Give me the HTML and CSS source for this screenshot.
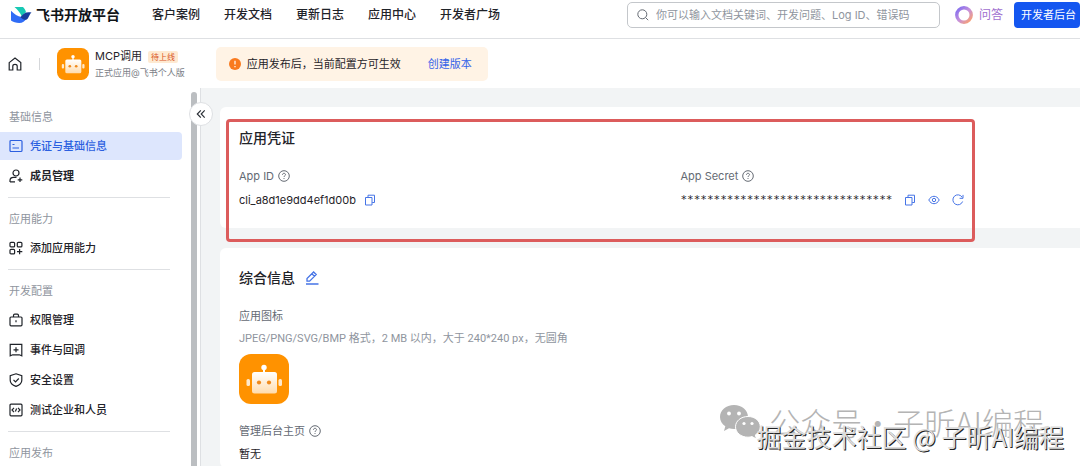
FILE: index.html
```html
<!DOCTYPE html>
<html lang="zh-CN">
<head>
<meta charset="utf-8">
<meta name="viewport" content="width=device-width, initial-scale=1">
<title>飞书开放平台</title>
<link rel="stylesheet" href="styles.css">
</head>
<body>
<svg class="defs" aria-hidden="true">
  <defs>
    <linearGradient id="botFace" x1="0" y1="0" x2="0" y2="1"><stop offset="0" stop-color="#fff"/><stop offset="1" stop-color="#ffdcae"/></linearGradient>
    <linearGradient id="ringFill" x1="0" y1="0" x2="1" y2="1"><stop offset="0" stop-color="#7d6bf0"/><stop offset=".5" stop-color="#c590dc"/><stop offset="1" stop-color="#ffa366"/></linearGradient>
    <symbol id="bot" viewBox="0 0 50 50">
      <rect width="50" height="50" rx="12" fill="#ff9200"/>
      <circle cx="25" cy="13.500" r="2.700" fill="#fff"/>
      <path d="M24 14h2v5h-2z" fill="#fff"/>
      <rect x="13" y="18" width="25" height="21.500" rx="2.500" fill="url(#botFace)"/>
      <rect x="7.500" y="25" width="3.500" height="7" rx="1.500" fill="#ffe9cc"/>
      <rect x="39.500" y="25" width="3.500" height="7" rx="1.500" fill="#ffe9cc"/>
      <circle cx="20" cy="28.500" r="2.100" fill="#f08a1c"/>
      <circle cx="30" cy="28.500" r="2.100" fill="#f08a1c"/>
    </symbol>
    <symbol id="help" viewBox="0 0 12 12">
      <circle cx="6" cy="6" r="5.300"/>
      <path d="M4.500 4.900C4.500 3.900 5.100 3.300 6 3.300s1.500.6 1.500 1.400C7.500 5.700 6 5.800 6 7M6 8.100v.9"/>
    </symbol>
    <symbol id="copy" viewBox="0 0 12 12">
      <path d="M1.500 3.500h6.500v7.500h-6.500zM4 3.300V1.200h6.500v7.300H8.200"/>
    </symbol>
  </defs>
</svg>

<header class="topbar">
  <a class="brand" href="#">
    <svg class="brand-mark" viewBox="0 0 22 18" aria-hidden="true">
      <path d="M4.500 1H13c1.600 1.500 2.600 3.300 3 5.300l-4.300 4C10 6.500 7.500 3.500 4.500 1z" fill="#18c9b4"/>
      <path d="M1 4.800c3.200 3.500 6.700 5.600 10.500 6.300 1.500.3 3-.2 4.200-1.200l3-2.800-2 5.200C15 15.500 12.500 17 9.300 17 6 17 3 16 1 14.500z" fill="#2f6cf6"/>
      <path d="M11 10.500c2.700-3.400 5.200-5 10.500-4-1.500 1.300-2.300 3.400-3.400 5.500-1.200 2.300-3.600 2.700-7.600-.8z" fill="#163c9c"/>
    </svg>
    <span>飞书开放平台</span>
  </a>
  <nav class="topnav" aria-label="主导航">
    <a href="#">客户案例</a>
    <a href="#">开发文档</a>
    <a href="#">更新日志</a>
    <a href="#">应用中心</a>
    <a href="#">开发者广场</a>
  </nav>
  <div class="tools">
    <label class="search">
      <svg class="search-icon" viewBox="0 0 12 12" aria-hidden="true"><circle cx="5.300" cy="5.300" r="4.500"/><path d="M8.600 8.600l2.600 2.600"/></svg>
      <input type="text" aria-label="搜索" placeholder="你可以输入文档关键词、开发问题、Log ID、错误码">
    </label>
    <a class="ask" href="#">
      <svg class="ring" viewBox="0 0 18 18" aria-hidden="true"><circle cx="9" cy="9" r="7.200" fill="none" stroke="url(#ringFill)" stroke-width="3.400"/></svg>
      <span>问答</span>
    </a>
    <button class="console" type="button">开发者后台</button>
  </div>
</header>

<div class="appbar">
  <a class="home" href="#" aria-label="首页">
    <svg class="line-icon" viewBox="0 0 14 14" aria-hidden="true"><path d="M1.200 5.600L7 1l5.800 4.600V13H9.200V9.300C9.200 8 8.300 7.300 7 7.300S4.800 8 4.800 9.300V13H1.200z"/></svg>
  </a>
  <span class="bar"></span>
  <svg class="app-icon" viewBox="0 0 50 50" aria-hidden="true"><use href="#bot"/></svg>
  <div class="app-info">
    <div class="app-name">MCP调用 <span class="tag">待上线</span></div>
    <div class="app-type">正式应用@飞书个人版</div>
  </div>
  <div class="notice">
    <svg class="notice-icon" viewBox="0 0 12 12" aria-hidden="true"><circle cx="6" cy="6" r="6" fill="#f97a1f"/><path d="M6 2.800v3.800M6 8v1.200" stroke="#fff" stroke-width="1.200"/></svg>
    <span>应用发布后，当前配置方可生效</span>
    <a href="#">创建版本</a>
  </div>
</div>

<div class="body">
  <aside class="sidebar">
    <nav class="menu" aria-label="应用菜单">
      <section class="group">
        <h2>基础信息</h2>
        <a class="active" href="#"><svg class="line-icon" viewBox="0 0 14 14" aria-hidden="true"><rect x="1" y="1.500" width="12" height="11" rx="1"/><path d="M3.500 5.500h2M3.500 9h6.500" /></svg>凭证与基础信息</a>
        <a class="strong" href="#"><svg class="line-icon" viewBox="0 0 14 14" aria-hidden="true"><circle cx="7" cy="4" r="3"/><path d="M1 13v-1.500C1 9.300 2.300 8.300 4.500 8.300H7.500M11 8.500v4.500M8.700 10.800h4.600M1 12.800h5"/></svg>成员管理</a>
      </section>
      <section class="group">
        <h2>应用能力</h2>
        <a href="#"><svg class="line-icon" viewBox="0 0 14 14" aria-hidden="true"><rect x="1" y="1.300" width="4.600" height="4.600" rx="1"/><rect x="8.300" y="1.300" width="4.600" height="4.600" rx="1"/><rect x="1" y="8.300" width="4.600" height="4.600" rx="1"/><path d="M10.600 8v5.300M8 10.600h5.300"/></svg>添加应用能力</a>
      </section>
      <section class="group">
        <h2>开发配置</h2>
        <a href="#"><svg class="line-icon" viewBox="0 0 14 14" aria-hidden="true"><rect x="1" y="4" width="12" height="8.800" rx="1"/><path d="M4.500 4V2.500c0-.8.500-1.300 1.300-1.300h2.400c.8 0 1.300.5 1.300 1.300V4M7 7.300v2"/></svg>权限管理</a>
        <a href="#"><svg class="line-icon" viewBox="0 0 14 14" aria-hidden="true"><path d="M1.200 1.300h11.600v11.500l-2.500-1H3.700l-2.500 1zM7 4.300v5M4.500 6.800h5"/></svg>事件与回调</a>
        <a href="#"><svg class="line-icon" viewBox="0 0 14 14" aria-hidden="true"><path d="M7 .8l5.800 1.800v4.600c0 3-2.300 5-5.800 6.200C3.500 12.200 1.200 10.200 1.200 7.200V2.600zM4.500 6.800l2 2 3.300-3.300"/></svg>安全设置</a>
        <a href="#"><svg class="line-icon" viewBox="0 0 14 14" aria-hidden="true"><rect x="1" y="1.200" width="12" height="11.600" rx="1"/><path d="M5 4.900L3 7l2 2.100M9 4.900L11 7 9 9.100M7.600 5.500L6.400 8.500"/></svg>测试企业和人员</a>
      </section>
      <section class="group">
        <h2>应用发布</h2>
      </section>
    </nav>
    <div class="track"></div>
    <button class="collapse" type="button" aria-label="收起菜单">
      <svg class="line-icon small" viewBox="0 0 12 12" aria-hidden="true"><path d="M5.800 2.300L2.300 6l3.500 3.700M9.700 2.300L6.200 6l3.500 3.700"/></svg>
    </button>
  </aside>

  <main class="main">
    <section class="card credentials">
      <h1>应用凭证</h1>
      <dl class="fields">
        <div class="field">
          <dt>App ID <svg class="help" aria-hidden="true"><use href="#help"/></svg></dt>
          <dd><span>cli_a8d1e9dd4ef1d00b</span>
            <button class="icon-btn" type="button" aria-label="复制"><svg aria-hidden="true"><use href="#copy"/></svg></button></dd>
        </div>
        <div class="field">
          <dt>App Secret <svg class="help" aria-hidden="true"><use href="#help"/></svg></dt>
          <dd><span class="secret">********************************</span>
            <button class="icon-btn" type="button" aria-label="复制"><svg aria-hidden="true"><use href="#copy"/></svg></button>
            <button class="icon-btn" type="button" aria-label="查看"><svg viewBox="0 0 12 12" aria-hidden="true"><path d="M.8 6C2 3.600 3.800 2.300 6 2.300S10 3.600 11.200 6C10 8.400 8.200 9.700 6 9.700S2 8.400.8 6z"/><circle cx="6" cy="6" r="1.700"/></svg></button>
            <button class="icon-btn" type="button" aria-label="重置"><svg viewBox="0 0 12 12" aria-hidden="true"><path d="M10.600 7.500A5 5 0 1 1 10.200 3.300M11 .9v3.400H7.600"/></svg></button></dd>
        </div>
      </dl>
      <div class="highlight"></div>
    </section>

    <section class="card general">
      <h1>综合信息
        <button class="icon-btn edit" type="button" aria-label="编辑"><svg viewBox="0 0 14 14" aria-hidden="true"><path d="M2 10.200V7.600L8.600 1l2.600 2.600-6.600 6.600zM6.900 2.800l2.600 2.600M1 13h12.500"/></svg></button>
      </h1>
      <h3>应用图标</h3>
      <p class="hint">JPEG/PNG/SVG/BMP 格式，2 MB 以内，大于 240*240 px，无圆角</p>
      <svg class="app-picture" viewBox="0 0 50 50" role="img" aria-label="应用图标"><use href="#bot"/></svg>
      <h3>管理后台主页 <svg class="help" aria-hidden="true"><use href="#help"/></svg></h3>
      <p class="value">暂无</p>
    </section>
  </main>
</div>

<div class="watermark">
  <div class="mark-back">
    <svg class="wechat" viewBox="0 0 42 36" aria-hidden="true">
      <path d="M15 1C7 1 1 6.200 1 13c0 4 2 7.200 5.300 9.300L5 27l5-2.700c1.600.4 3.300.7 5 .7 8 0 14-5.200 14-12S23 1 15 1z"/>
      <path class="front" d="M29 12.500c-7 0-12.500 4.500-12.500 10.300S22 33.200 29 33.200c1.400 0 2.800-.2 4-.6l4.500 2.400-1.200-4c3-1.900 5-4.800 5-8.200 0-5.800-5.300-10.300-12.300-10.300z"/>
      <g fill="#fff"><circle cx="10" cy="9.500" r="1.900"/><circle cx="20" cy="9.500" r="1.900"/><circle cx="25" cy="19.500" r="1.600"/><circle cx="33" cy="19.500" r="1.600"/></g>
    </svg>
    <span>公众号·子昕AI编程</span>
  </div>
  <div class="mark-front">掘金技术社区 @ 子昕AI编程</div>
</div>
</body>
</html>
```
FILE: styles.css
```css
* { box-sizing: border-box; }

body {
  margin: 0;
  min-height: 100vh;
  display: flex;
  flex-direction: column;
  position: relative;
  overflow: hidden;
  background: #fff;
  color: #1f2329;
  font: 11px/18px Inter, "Noto Sans CJK SC", sans-serif;
}

a { color: inherit; text-decoration: none; }
button, input { font: inherit; }
h1, h2, h3, p, dl, dd { margin: 0; }
.defs { position: absolute; width: 0; height: 0; }

.topbar {
  display: flex;
  align-items: center;
  padding: 0 0 9px 10px;
  height: 39px;
  border-bottom: 1px solid #dee0e3;
}
.brand {
  display: flex;
  align-items: center;
  gap: 4px;
  font-size: 14px;
  font-weight: 700;
  color: #101418;
}
.brand-mark { width: 22px; height: 18px; }
.topnav {
  display: flex;
  gap: 24px;
  margin-left: 32px;
  font-size: 12px;
  font-weight: 500;
}
.tools {
  display: flex;
  align-items: center;
  margin-left: auto;
}
.search {
  display: flex;
  align-items: center;
  gap: 7px;
  width: 313px;
  height: 26px;
  padding: 0 9px;
  border: 1px solid #c4c7cb;
  border-radius: 5px;
}
.search-icon {
  width: 12px;
  height: 12px;
  fill: none;
  stroke: #646a73;
}
.search input {
  flex: 1;
  min-width: 0;
  padding: 0;
  border: 0;
  outline: 0;
  background: none;
}
.search input::placeholder { color: #8f959e; opacity: 1; }
.ask {
  display: flex;
  align-items: center;
  gap: 6px;
  margin: 0 11px 0 15px;
  font-size: 12px;
  color: #a070cf;
}
.ring { width: 18px; height: 18px; }
.console {
  height: 26px;
  padding: 0 4px 0 7px;
  border: 0;
  border-radius: 4px;
  background: #1456f0;
  color: #fff;
}

.appbar {
  display: flex;
  align-items: center;
  height: 49px;
  padding-left: 8px;
}
.line-icon {
  display: block;
  width: 14px;
  height: 14px;
  fill: none;
  stroke: currentColor;
  stroke-width: 1.2;
}
.line-icon.small { width: 12px; height: 12px; }
.bar {
  width: 1px;
  height: 12px;
  margin: 0 17px;
  background: #d5d7da;
}
.app-icon { width: 32px; height: 32px; }
.app-info { margin-left: 6px; padding-top: 2px; }
.app-name {
  display: flex;
  align-items: center;
  gap: 6px;
  line-height: 17px;
}
.tag {
  padding: 0 3px;
  border-radius: 2px;
  background: #feead2;
  color: #d9541e;
  font-size: 8px;
  line-height: 12px;
}
.app-type {
  color: #7b8087;
  font-size: 9px;
  line-height: 16px;
}
.notice {
  display: flex;
  align-items: center;
  height: 34px;
  margin-left: 31px;
  padding: 0 16px 0 13px;
  border-radius: 5px;
  background: #fff3e5;
}
.notice-icon { width: 12px; height: 12px; margin-right: 6px; }
.notice a { margin-left: 27px; color: #3563e9; }

.body { display: flex; flex: 1; }
.sidebar {
  display: flex;
  position: relative;
  z-index: 1;
  width: 201px;
  border-right: 1px solid #dee0e3;
}
.menu { width: 182px; padding-top: 8px; }
.group h2 {
  margin: 11px 0 5px 9px;
  color: #8f959e;
  font-size: 11px;
  font-weight: 400;
  line-height: 20px;
}
.group a {
  display: flex;
  align-items: center;
  gap: 7px;
  height: 28px;
  margin-top: 2px;
  padding-left: 9px;
  border-radius: 0 4px 4px 0;
  font-weight: 500;
}
.group + .group::before {
  content: "";
  display: block;
  height: 1px;
  margin: 7px 12px 0 8px;
  background: #dee0e3;
}
.group a.active { background: #dde6fd; color: #2b5fe0; }
.group a.strong { font-weight: 700; }
.track {
  width: 6px;
  margin: 4px 0 0 9px;
  border-radius: 3px 3px 0 0;
  background: #bbbec1;
}
.collapse {
  display: grid;
  place-items: center;
  position: absolute;
  top: 14px;
  right: -13px;
  width: 24px;
  height: 24px;
  padding: 0;
  border: 1px solid #dee0e3;
  border-radius: 50%;
  background: #fff;
  color: #2b2f36;
}

.main {
  display: flex;
  flex-direction: column;
  flex: 1;
  gap: 20px;
  padding: 19px 0 0 19px;
  background: #f2f4f5;
}
.card {
  position: relative;
  padding: 20px 18px 19px 19px;
  border-radius: 6px 0 0 6px;
  background: #fff;
}
.card h1 {
  display: flex;
  align-items: center;
  gap: 10px;
  font-size: 14px;
  font-weight: 500;
  line-height: 22px;
}
.fields {
  display: grid;
  grid-template-columns: 1fr 1fr;
  gap: 60px;
  margin-top: 18px;
}
.field dt, .card h3 {
  display: flex;
  align-items: center;
  gap: 4px;
  color: #646a73;
  font-size: 11px;
  font-weight: 400;
  line-height: 18px;
}
.field dd {
  display: flex;
  align-items: center;
  gap: 12px;
  margin-top: 6px;
}
.field dd span { margin-right: -4px; }
.field dd .secret {
  margin-right: 0;
  font-family: "DejaVu Sans Mono", monospace;
}
.help {
  width: 12px;
  height: 12px;
  fill: none;
  stroke: #646a73;
}
.icon-btn {
  padding: 0;
  border: 0;
  background: none;
}
.icon-btn svg {
  display: block;
  width: 12px;
  height: 12px;
  fill: none;
  stroke: #4674e6;
}
.icon-btn.edit svg { width: 14px; height: 14px; stroke-width: 1.3; }
.highlight {
  position: absolute;
  top: 12px;
  left: 6px;
  right: 105px;
  bottom: -14px;
  border: 3px solid #dc5c5c;
  border-radius: 4px;
  pointer-events: none;
}
.general { flex: 1; padding-top: 19px; padding-bottom: 0; }
.general h1 + h3 { margin-top: 18px; }
.hint {
  margin-top: 5px;
  color: #8f959e;
  font-family: Roboto, "Noto Sans CJK SC", sans-serif;
}
.app-picture {
  display: block;
  width: 50px;
  height: 50px;
  margin: 6px 0 18px;
}
.value { margin-top: 5px; }

.watermark {
  position: absolute;
  right: 16px;
  bottom: 15px;
  pointer-events: none;
  z-index: 2;
}
.mark-back {
  display: flex;
  align-items: center;
  gap: 8px;
  position: absolute;
  right: 20px;
  bottom: 13px;
  color: #b4b4b4;
  font: 300 31px/36px "Noto Sans CJK SC", sans-serif;
  white-space: nowrap;
}
.wechat { width: 42px; height: 36px; fill: #b4b4b4; }
.wechat .front { stroke: #fff; stroke-width: 1; }
.mark-front {
  position: relative;
  color: #dcdcdc;
  font: 25px/34px "Noto Sans CJK SC", sans-serif;
  text-shadow: 1px 1px 0 #222;
  white-space: nowrap;
}
```
